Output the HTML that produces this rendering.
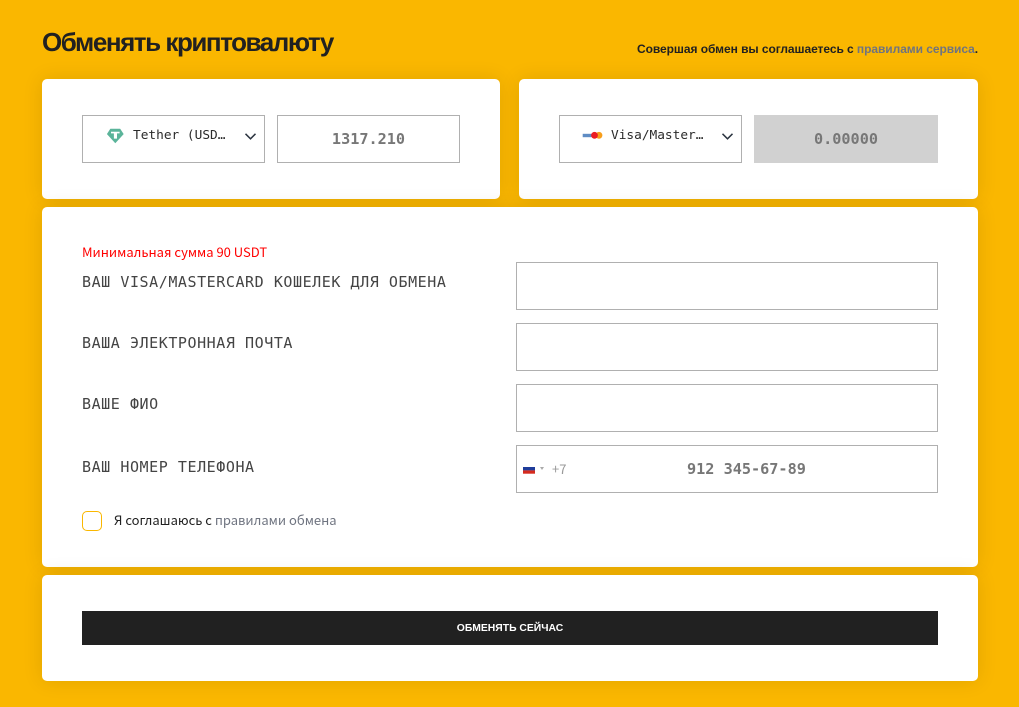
<!DOCTYPE html>
<html lang="ru"><head><meta charset="utf-8"><title>Обменять криптовалюту</title>
<style>
*{box-sizing:border-box;margin:0;padding:0}
html,body{width:1019px;height:707px;overflow:hidden;background:#fab700}
body{position:relative;font-family:"Liberation Sans",sans-serif;color:#212121}
.a{position:absolute;white-space:nowrap}
.card{position:absolute;background:#fff;border-radius:5px;box-shadow:0 0 20px rgba(0,0,0,.1)}
.box{position:absolute;background:#fff;border:1px solid #b0b0b0}
.lab{font-family:"DejaVu Sans Mono",monospace;font-size:15px;color:#444;left:82px;letter-spacing:.56px;line-height:20px}
.val{font-family:"DejaVu Sans Mono",monospace;font-size:15.2px;color:#777;font-weight:bold;text-align:center;line-height:20px}
.sel{font-family:"DejaVu Sans Mono",monospace;font-size:12.8px;color:#2b2b2b;line-height:16px}
.ns{font-family:"Noto Sans CJK SC","Liberation Sans",sans-serif;font-size:13px;line-height:17px}
</style></head><body>
<div class="a" style="left:42px;top:26px;font-size:26px;font-weight:bold;letter-spacing:-1.45px;line-height:32px;color:#212121">Обменять криптовалюту</div>
<div class="a" style="right:41px;top:41px;font-size:12px;font-weight:bold;letter-spacing:-.06px;line-height:16px;color:#212121">Совершая обмен вы соглашаетесь с <span style="color:#6f7480">правилами сервиса</span>.</div>

<div class="card" style="left:42px;top:79px;width:458px;height:120px"></div>
<div class="card" style="left:519px;top:79px;width:459px;height:120px"></div>
<div class="card" style="left:42px;top:207px;width:936px;height:360px"></div>
<div class="card" style="left:42px;top:575px;width:936px;height:106px"></div>

<div class="box" style="left:82px;top:115px;width:183px;height:48px"></div>
<svg class="a" style="left:107px;top:128px" width="17" height="16" viewBox="0 0 17 16"><path d="M3.500 1H13L16.300 6 8.300 14.800 .3 6z" fill="#5bb49a" stroke="#5bb49a" stroke-width=".6" stroke-linejoin="round"/><path d="M4 3.700h8.600v1.700H10v5.200H6.900V5.400H4z" fill="#fff"/></svg>
<div class="a sel" style="left:133px;top:128px">Tether (USD…</div>
<svg class="a" style="left:244px;top:132px" width="13" height="9" viewBox="0 0 13 9"><path d="M1.500 1.800 6.500 6.800 11.500 1.800" fill="none" stroke="#2b3440" stroke-width="1.500"/></svg>
<div class="box val" style="left:277px;top:115px;width:183px;height:48px;padding-top:13px">1317.210</div>

<div class="box" style="left:559px;top:115px;width:183px;height:48px"></div>
<svg class="a" style="left:582px;top:130px" width="21" height="11" viewBox="0 0 21 11"><rect x=".7" y="3.800" width="9" height="3.400" fill="#5f8cc4"/><circle cx="17" cy="5.300" r="3.400" fill="#f79e1b"/><circle cx="12.500" cy="5.300" r="3.400" fill="#eb1c24"/></svg>
<div class="a sel" style="left:611px;top:128px">Visa/Master…</div>
<svg class="a" style="left:721px;top:132px" width="13" height="9" viewBox="0 0 13 9"><path d="M1.500 1.800 6.500 6.800 11.500 1.800" fill="none" stroke="#2b3440" stroke-width="1.500"/></svg>
<div class="a val" style="left:754px;top:115px;width:184px;height:48px;background:#d1d1d1;padding-top:14px">0.00000</div>

<div class="a ns" style="left:82px;top:243px;color:#f00">Минимальная сумма 90 USDT</div>

<div class="a lab" style="top:272px">ВАШ VISA/MASTERCARD КОШЕЛЕК ДЛЯ ОБМЕНА</div>
<div class="box" style="left:516px;top:262px;width:422px;height:48px"></div>
<div class="a lab" style="top:333px">ВАША ЭЛЕКТРОННАЯ ПОЧТА</div>
<div class="box" style="left:516px;top:323px;width:422px;height:48px"></div>
<div class="a lab" style="top:394px">ВАШЕ ФИО</div>
<div class="box" style="left:516px;top:384px;width:422px;height:48px"></div>
<div class="a lab" style="top:457px">ВАШ НОМЕР ТЕЛЕФОНА</div>
<div class="box" style="left:516px;top:445px;width:422px;height:48px"></div>
<svg class="a" style="left:523px;top:464px" width="12" height="10" viewBox="0 0 12 10"><rect width="12" height="3" fill="#fff"/><rect y="3" width="12" height="3.400" fill="#1f3c9a"/><rect y="6.400" width="12" height="3.300" fill="#d52b1e"/></svg>
<svg class="a" style="left:540px;top:467px" width="4" height="3" viewBox="0 0 4 3"><path d="M0 0h4L2 3z" fill="#aaa"/></svg>
<div class="a ns" style="left:552px;top:460px;color:#999">+7</div>
<div class="a val" style="left:687px;top:459px;text-align:left">912 345-67-89</div>

<div class="a" style="left:82px;top:511px;width:20px;height:20px;border:1px solid #fab700;border-radius:5px;background:#fff"></div>
<div class="a ns" style="left:114px;top:511px;color:#222">Я соглашаюсь с <span style="color:#6f7480">правилами обмена</span></div>

<div class="a" style="left:82px;top:611px;width:856px;height:34px;padding-top:1px;background:#212121;color:#fff;font-size:10.370px;font-weight:bold;text-align:center;line-height:34px">ОБМЕНЯТЬ СЕЙЧАС</div>
</body></html>
